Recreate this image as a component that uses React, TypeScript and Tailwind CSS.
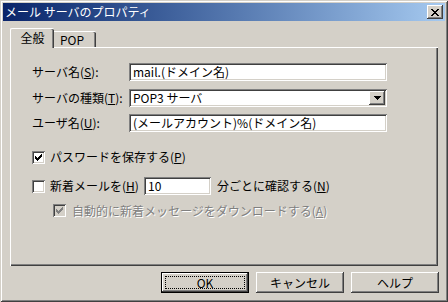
import React from 'react';

const face = 'bg-[#d4d0c8]';
const raised =
  'shadow-[inset_-1px_-1px_#404040,inset_1px_1px_#ffffff,inset_-2px_-2px_#808080,inset_2px_2px_#d4d0c8]';
const sunken =
  'shadow-[inset_1px_1px_#808080,inset_-1px_-1px_#ffffff,inset_2px_2px_#404040,inset_-2px_-2px_#d4d0c8]';

function CloseGlyph() {
  return (
    <svg width="8" height="7" viewBox="0 0 8 7" shapeRendering="crispEdges">
      <path
        d="M0 0h2v1H0zM6 0h2v1H6zM1 1h2v1H1zM5 1h2v1H5zM2 2h4v1H2zM3 3h2v1H3zM2 4h4v1H2zM1 5h2v1H1zM5 5h2v1H5zM0 6h2v1H0zM6 6h2v1H6z"
        fill="#000"
      />
    </svg>
  );
}

function Check({ color }: { color: string }) {
  return (
    <svg width="7" height="7" viewBox="0 0 7 7" shapeRendering="crispEdges">
      <path
        d="M6 0h1v1H6zM5 1h2v1H5zM0 2h1v1H0zM4 2h3v1H4zM0 3h2v1H0zM3 3h3v1H3zM0 4h5v1H0zM1 5h3v1H1zM2 6h1v1H2z"
        fill={color}
      />
    </svg>
  );
}

function Checkbox({ checked, disabled }: { checked?: boolean; disabled?: boolean }) {
  return (
    <div
      className={`w-[13px] h-[13px] shrink-0 flex items-center justify-center ${sunken} ${
        disabled ? 'bg-[#d4d0c8]' : 'bg-white'
      }`}
    >
      {checked && <Check color={disabled ? '#808080' : '#000'} />}
    </div>
  );
}

function Field({ value, width }: { value: string; width: string }) {
  return (
    <div className={`${width} h-[18px] bg-white ${sunken} flex items-center pl-[4px] whitespace-nowrap`}>
      {value}
    </div>
  );
}

function Button({ label, isDefault }: { label: string; isDefault?: boolean }) {
  if (isDefault) {
    return (
      <div className="relative w-[88px] h-[21px] border border-black">
        <div className={`w-full h-full ${raised} flex items-center justify-center`}>{label}</div>
        <div className="absolute left-[3px] right-[3px] top-[3px] bottom-[3px] border border-dotted border-black" />
      </div>
    );
  }
  return (
    <div className={`w-[88px] h-[21px] ${raised} flex items-center justify-center`}>{label}</div>
  );
}

export default function App() {
  return (
    <div
      className={`w-[448px] h-[302px] ${face} p-[3px] flex flex-col text-[12px] leading-none text-black shadow-[inset_1px_1px_#d4d0c8,inset_-1px_-1px_#404040,inset_2px_2px_#ffffff,inset_-2px_-2px_#808080]`}
      style={{ fontFamily: '"Noto Sans CJK JP", "Liberation Sans", sans-serif' }}
    >
      {/* title bar */}
      <div className="h-[18px] flex items-center justify-between pl-[2px] pr-[2px] bg-gradient-to-r from-[#0a246a] to-[#a6caf0]">
        <span className="text-white">メール サーバのプロパティ</span>
        <div className={`w-[16px] h-[14px] ${face} ${raised} flex items-center justify-center`}>
          <CloseGlyph />
        </div>
      </div>

      {/* tabs */}
      <div className="px-[7px] pt-[7px]">
        <div className="h-[19px] flex items-end">
          <div
            className={`relative z-10 w-[44px] h-[20px] -mb-px ${face} border-l border-t border-white rounded-tl-[2px] rounded-tr-[2px] shadow-[inset_-1px_0_#404040,inset_-2px_0_#808080] flex items-center justify-center pb-[2px]`}
          >
            全般
          </div>
          <div
            className={`w-[42px] h-[16px] ${face} border-t border-white rounded-tr-[2px] shadow-[inset_-1px_0_#404040,inset_-2px_0_#808080] flex items-center pl-[6px] pt-[1px]`}
          >
            POP
          </div>
        </div>

        {/* tab page */}
        <div
          className={`w-[428px] h-[219px] ${face} shadow-[inset_1px_1px_#ffffff,inset_-1px_-1px_#404040,inset_-2px_-2px_#808080] pt-[16px] pl-[22px] flex flex-col`}
        >
          <div className="flex items-center h-[18px]">
            <span className="w-[97px]">
              サーバ名(<u>S</u>):
            </span>
            <Field value="mail.(ドメイン名)" width="w-[258px]" />
          </div>
          <div className="flex items-center h-[18px] mt-[8px]">
            <span className="w-[97px]">
              サーバの種類(<u>T</u>):
            </span>
            <div className={`w-[258px] h-[18px] bg-white ${sunken} flex items-center pl-[4px] pr-[2px]`}>
              <span className="flex-1">POP3 サーバ</span>
              <div className={`w-[16px] h-[14px] ${face} ${raised} flex items-center justify-center`}>
                <svg width="7" height="4" viewBox="0 0 7 4" shapeRendering="crispEdges">
                  <path d="M0 0h7v1H0zM1 1h5v1H1zM2 2h3v1H2zM3 3h1v1H3z" fill="#000" />
                </svg>
              </div>
            </div>
          </div>
          <div className="flex items-center h-[18px] mt-[7px]">
            <span className="w-[97px]">
              ユーザ名(<u>U</u>):
            </span>
            <Field value="(メールアカウント)%(ドメイン名)" width="w-[258px]" />
          </div>

          <div className="flex items-center h-[18px] mt-[16px] gap-[5px]">
            <Checkbox checked />
            <span>
              パスワードを保存する(<u>P</u>)
            </span>
          </div>

          <div className="flex items-center h-[18px] mt-[11px]">
            <Checkbox />
            <span className="w-[99px] pl-[5px]">
              新着メールを(<u>H</u>)
            </span>
            <Field value="10" width="w-[67px]" />
            <span className="ml-[6px]">
              分ごとに確認する(<u>N</u>)
            </span>
          </div>

          <div className="flex items-center h-[13px] mt-[9px] pl-[21px] gap-[6px]">
            <Checkbox checked disabled />
            <span className="text-[#808080] [text-shadow:1px_1px_0_#ffffff]">
              自動的に新着メッセージをダウンロードする(<u>A</u>)
            </span>
          </div>
        </div>
      </div>

      {/* buttons */}
      <div className="flex justify-end gap-[7px] pr-[6px] mt-[6px]">
        <Button label="OK" isDefault />
        <Button label="キャンセル" />
        <Button label="ヘルプ" />
      </div>
    </div>
  );
}
